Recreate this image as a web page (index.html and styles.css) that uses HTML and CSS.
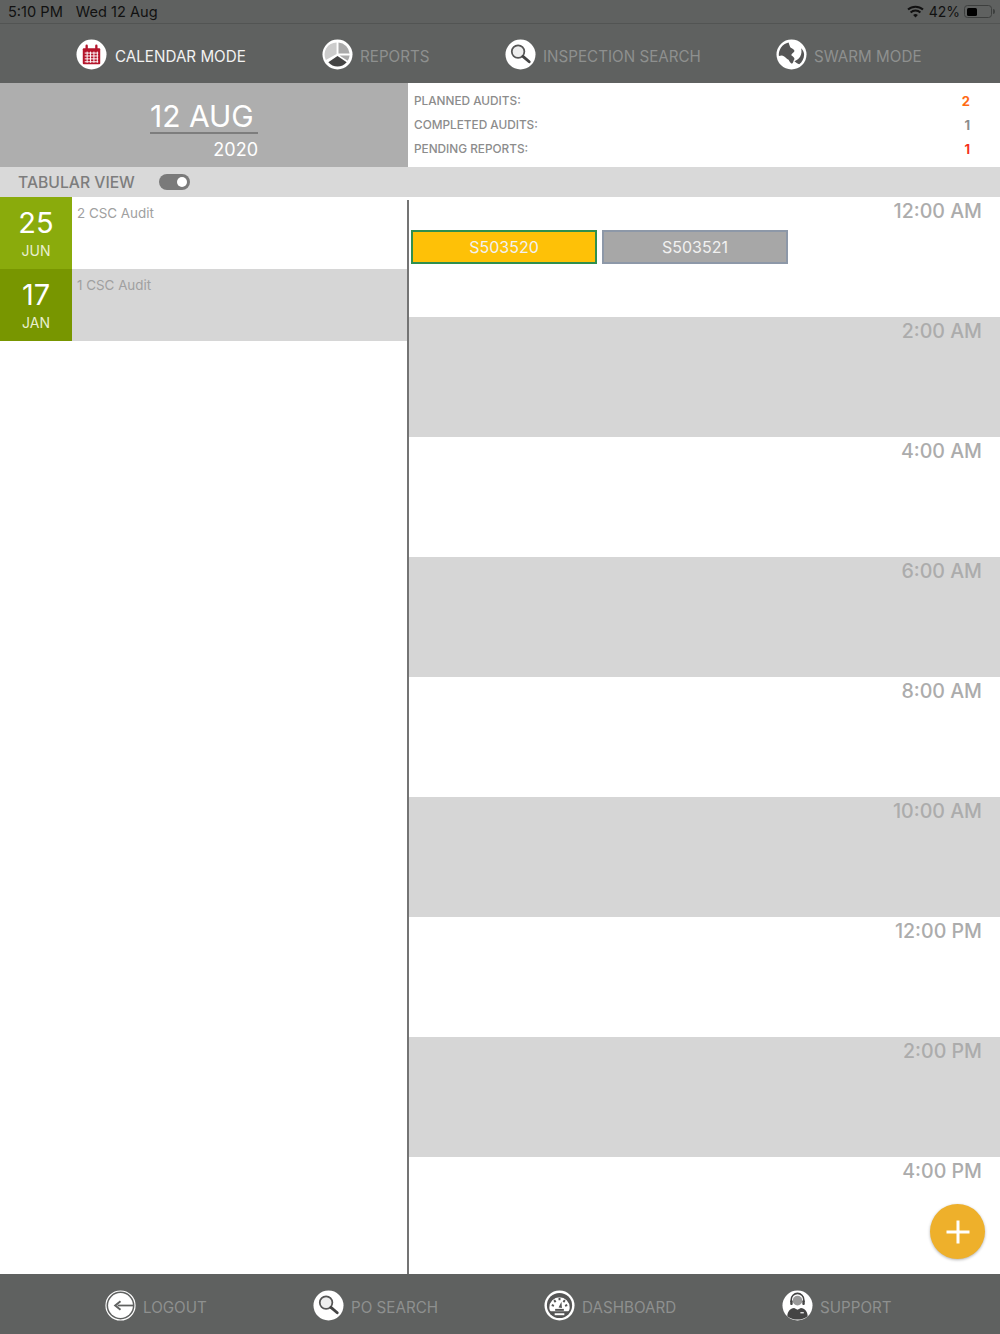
FILE: index.html
```html
<!DOCTYPE html>
<html lang="en">
<head>
  <meta charset="UTF-8" />
  <title>Calendar Mode</title>
  <link rel="stylesheet" href="styles.css">
</head>
<body>
  <div class="status-bar">
    <div class="status-time"><span>5:10 PM</span><span>Wed 12 Aug</span></div>
    <div class="status-right">
      <svg class="wifi" width="17" height="13" viewBox="0 0 17 13">
        <path d="M1 4.600a11 11 0 0 1 15 0" fill="none" stroke="#111" stroke-width="2"/>
        <path d="M3.600 7.400a7.200 7.200 0 0 1 9.800 0" fill="none" stroke="#111" stroke-width="2"/>
        <path d="M6.100 10a3.600 3.600 0 0 1 4.800 0L8.500 12.600z" fill="#111"/>
      </svg>
      <span>42%</span>
      <span class="battery"><span class="battery-fill"></span></span>
      <span class="battery-tip"></span>
    </div>
  </div>

  <nav class="top-nav">
    <a class="nav-item active">
      <svg class="icon" viewBox="0 0 32 32">
        <circle cx="16" cy="16" r="15.500" fill="#fff"/>
        <path d="M8 9.500h16a1 1 0 0 1 1 1V25a1 1 0 0 1-1 1H8a1 1 0 0 1-1-1V10.500a1 1 0 0 1 1-1z" fill="#b5152b"/>
        <path d="M11 7v4M21 7v4" stroke="#b5152b" stroke-width="2.400" stroke-linecap="round"/>
        <path d="M9 14.500h14M9 17.500h14M9 20.500h14M9 23.500h14M11.500 13v11.500M15 13v11.500M18.500 13v11.500M22 13v11.500" stroke="#fff" stroke-width="1"/>
      </svg>
      <span class="nav-label">CALENDAR MODE</span>
    </a>
    <a class="nav-item">
      <svg class="icon" viewBox="0 0 32 32">
        <circle cx="16" cy="16" r="15.500" fill="#fff"/>
        <path d="M15 15.500V3.500a12.500 12.500 0 0 0-11 18.200z" fill="#ccc"/>
        <path d="M17 15V3.500a12.500 12.500 0 0 1 11.500 11.500z" fill="#aaa"/>
        <path d="M18 17h10.500a12.500 12.500 0 0 1-2 5.500z" fill="#aaa"/>
        <path d="M16 17.500l9.500 6.500a12.500 12.500 0 0 1-19 0z" fill="#444"/>
      </svg>
      <span class="nav-label">REPORTS</span>
    </a>
    <a class="nav-item">
      <svg class="icon" viewBox="0 0 32 32">
        <circle cx="16" cy="16" r="15.500" fill="#fff"/>
        <circle cx="13.500" cy="13" r="6.500" fill="#eee" stroke="#555" stroke-width="1.800"/>
        <path d="M18.500 18l6.500 5.500" stroke="#444" stroke-width="3" stroke-linecap="round"/>
      </svg>
      <span class="nav-label">INSPECTION SEARCH</span>
    </a>
    <a class="nav-item">
      <svg class="icon" viewBox="0 0 32 32">
        <circle cx="16" cy="16" r="15.500" fill="#fff"/>
        <path d="M13 3.500c-3 .5-6 2.500-8 5.500-1.500 2.500-2.500 6-2 8.500 2-.5 3.500-1 5.500.5 2 1.500 3 3 4.500 3.500 1 1.500 1.500 3.500 3.500 4 1.500-1 1.500-3.500 2.500-4.500.5-1.500-1.500-3-3-4-.5-2 2.500-2.500 3-4.500 0-2.500-3.500-2.500-4.500-4.500-.5-1.500-1-3-1.500-4.500z" fill="#555"/>
        <path d="M26 9.500c.5 3 .5 6-1 8.500-1.500 2.500-4 4-6 5 1 1 3.500 2.500 5 3 3-2 5-6 5-10 0-2.500-1.500-5-3-6.500z" fill="#555"/>
      </svg>
      <span class="nav-label">SWARM MODE</span>
    </a>
  </nav>

  <header class="summary">
    <div class="date-box">
      <div class="date-inner">
        <div class="date-main">12 AUG</div>
        <div class="date-year">2020</div>
      </div>
    </div>
    <div class="counts">
      <div class="count-row"><span>PLANNED AUDITS:</span><b class="orange">2</b></div>
      <div class="count-row"><span>COMPLETED AUDITS:</span><b>1</b></div>
      <div class="count-row"><span>PENDING REPORTS:</span><b class="red">1</b></div>
    </div>
  </header>

  <div class="view-bar">
    <span>TABULAR VIEW</span>
    <span class="toggle"><span class="knob"></span></span>
  </div>

  <main class="content">
    <section class="audit-list">
      <div class="audit-row">
        <div class="date-tile"><div class="day">25</div><div class="month">JUN</div></div>
        <div class="audit-name">2 CSC Audit</div>
      </div>
      <div class="audit-row alt">
        <div class="date-tile dark"><div class="day">17</div><div class="month">JAN</div></div>
        <div class="audit-name">1 CSC Audit</div>
      </div>
    </section>

    <section class="timeline">
      <div class="slot">
        <div class="time">12:00 AM</div>
        <div class="events">
          <div class="event yellow">S503520</div>
          <div class="event grey">S503521</div>
        </div>
      </div>
      <div class="slot alt"><div class="time">2:00 AM</div></div>
      <div class="slot"><div class="time">4:00 AM</div></div>
      <div class="slot alt"><div class="time">6:00 AM</div></div>
      <div class="slot"><div class="time">8:00 AM</div></div>
      <div class="slot alt"><div class="time">10:00 AM</div></div>
      <div class="slot"><div class="time">12:00 PM</div></div>
      <div class="slot alt"><div class="time">2:00 PM</div></div>
      <div class="slot"><div class="time">4:00 PM</div></div>
      <button class="fab">
        <svg width="26" height="26" viewBox="0 0 26 26"><path d="M13 1.500v23M1.500 13h23" stroke="#fff" stroke-width="3"/></svg>
      </button>
    </section>
  </main>

  <footer class="bottom-nav">
    <a class="nav-item">
      <svg class="icon" viewBox="0 0 32 32">
        <circle cx="16" cy="16" r="15" fill="none" stroke="#fff" stroke-width="1.200"/>
        <circle cx="16" cy="16" r="12.800" fill="#fff"/>
        <path d="M29 16H13" stroke="#5f6160" stroke-width="1.800"/>
        <path d="M16 11.500L10.500 16l5.500 4.500" fill="none" stroke="#5f6160" stroke-width="2"/>
      </svg>
      <span class="nav-label">LOGOUT</span>
    </a>
    <a class="nav-item">
      <svg class="icon" viewBox="0 0 32 32">
        <circle cx="16" cy="16" r="15.500" fill="#fff"/>
        <circle cx="13.500" cy="13" r="6.500" fill="#eee" stroke="#555" stroke-width="1.800"/>
        <path d="M18.500 18l6.500 5.500" stroke="#444" stroke-width="3" stroke-linecap="round"/>
      </svg>
      <span class="nav-label">PO SEARCH</span>
    </a>
    <a class="nav-item">
      <svg class="icon" viewBox="0 0 32 32">
        <circle cx="16" cy="16" r="15.500" fill="#fff"/>
        <circle cx="16" cy="16" r="13" fill="#555"/>
        <path d="M5.500 18a10.500 10.500 0 1 1 21 0c0 2-.5 3-1.500 4H7c-1-1-1.500-2-1.500-4z" fill="#fff"/>
        <path d="M16 8v2.500M10.500 10.500l1.500 2M21.500 10.500l-1.500 2M8 15.500l2.300.8M24 15.500l-2.300.8" stroke="#555" stroke-width="2"/>
        <path d="M15 18l3-6 .5 6.500z" fill="#555"/>
        <rect x="11.500" y="19.500" width="9" height="2" fill="#555"/>
        <rect x="11" y="24" width="10" height="2" fill="#fff"/>
      </svg>
      <span class="nav-label">DASHBOARD</span>
    </a>
    <a class="nav-item">
      <svg class="icon" viewBox="0 0 32 32">
        <circle cx="16" cy="16" r="15.500" fill="#fff"/>
        <circle cx="16" cy="11" r="5" fill="#999"/>
        <path d="M9.500 12V10a6.500 6.500 0 0 1 13 0v2" fill="none" stroke="#444" stroke-width="1.600"/>
        <rect x="8.500" y="10.500" width="2.500" height="5" rx="1" fill="#444"/>
        <rect x="21" y="10.500" width="2.500" height="5" rx="1" fill="#444"/>
        <path d="M5.500 27c0-5 3-8 7-8.500l3.500 2 3.500-2c4 .5 7 3.500 7 8.500-3 2.500-6.500 3.500-10.500 3.500s-7.500-1-10.500-3.500z" fill="#444"/>
        <path d="M19 23.500h3.500" stroke="#fff" stroke-width="1.200"/>
      </svg>
      <span class="nav-label">SUPPORT</span>
    </a>
  </footer>
</body>
</html>
```

FILE: styles.css
```css
* {
  box-sizing: border-box;
}
html, body {
  height: 100%;
}
body {
  margin: 0;
  display: flex;
  flex-direction: column;
  font-family: "Inter", "Liberation Sans", sans-serif;
  background-color: #fff;
  color: #8f8f8f;
}

/* status bar */
.status-bar {
  height: 24px;
  flex: none;
  display: flex;
  justify-content: space-between;
  align-items: center;
  padding: 0 5px 0 8px;
  background-color: #5f6160;
  border-bottom: 1px solid #525453;
  color: #111;
  font-size: 14.600px;
}
.status-time {
  display: flex;
  gap: 13px;
}
.status-right {
  display: flex;
  align-items: center;
  gap: 4px;
  font-size: 14px;
}
.wifi {
  margin-right: 1px;
}
.battery {
  width: 28px;
  height: 13px;
  border: 1px solid #3d3f3e;
  border-radius: 3.500px;
  padding: 1.500px;
}
.battery-fill {
  display: block;
  width: 10px;
  height: 100%;
  background-color: #000;
  border-radius: 1.500px;
}
.battery-tip {
  width: 2px;
  height: 5px;
  margin-left: -3px;
  background-color: #3d3f3e;
  border-radius: 0 2px 2px 0;
}

/* nav bars */
.top-nav, .bottom-nav {
  flex: none;
  display: grid;
  align-items: center;
  padding-top: 2px;
  background-color: #5f6160;
}
.top-nav {
  height: 59px;
  padding-left: 76px;
  grid-template-columns: 246px 183px 271px 1fr;
}
.bottom-nav {
  height: 60px;
  padding-left: 105px;
  grid-template-columns: 208px 231px 238px 1fr;
}
.nav-item {
  display: flex;
  align-items: center;
  gap: 7px;
  font-size: 15.200px;
  color: #8e908f;
}
.nav-item.active {
  gap: 8px;
  color: #f2f2f2;
}
.nav-label {
  padding-top: 3px;
}
.bottom-nav .nav-label {
  padding-top: 4px;
}
.icon {
  width: 31px;
  height: 31px;
  flex: none;
}

/* date + counts */
.summary {
  flex: none;
  height: 84px;
  display: flex;
}
.date-box {
  width: 408px;
  background-color: #aeaeae;
  display: flex;
  justify-content: center;
  color: #fff;
}
.date-inner {
  width: 108px;
  text-align: right;
}
.date-main {
  height: 51px;
  padding-top: 16px;
  border-bottom: 2px solid #7d7d7d;
  font-size: 30px;
  line-height: 35px;
  text-align: left;
}
.date-year {
  padding-top: 1px;
  font-size: 18px;
  line-height: 30px;
}
.counts {
  flex: 1;
  padding: 6px 30px 0 6px;
}
.count-row {
  height: 24px;
  display: flex;
  justify-content: space-between;
  align-items: center;
  font-size: 11.800px;
  font-weight: 500;
  color: #8c8c8c;
}
.count-row b {
  font-size: 13px;
  font-weight: 700;
}
.orange {
  color: #ff6a13;
}
.red {
  color: #f5301a;
}

/* tabular view bar */
.view-bar {
  flex: none;
  height: 30px;
  display: flex;
  align-items: center;
  gap: 24px;
  padding-left: 18px;
  background-color: #d9d9d9;
  font-size: 15.700px;
  font-weight: 500;
  color: #7d7d7d;
}
.toggle {
  width: 31px;
  height: 16px;
  padding: 3px;
  display: flex;
  justify-content: flex-end;
  background-color: #7a7a7a;
  border-radius: 8px;
}
.knob {
  width: 10px;
  height: 10px;
  background-color: #fff;
  border-radius: 50%;
}

/* main area */
.content {
  flex: 1;
  min-height: 0;
  display: flex;
}
.audit-list {
  width: 407px;
  flex: none;
}
.audit-row {
  height: 72px;
  display: flex;
}
.audit-row.alt {
  background-color: #d6d6d6;
}
.date-tile {
  width: 72px;
  flex: none;
  background-color: #8aab0c;
  color: #fff;
  text-align: center;
}
.date-tile.dark {
  background-color: #789600;
}
.day {
  padding-top: 8px;
  font-size: 29px;
  line-height: 36px;
}
.month {
  font-size: 14px;
  line-height: 20px;
  color: #e9efcf;
}
.audit-name {
  padding: 8px 0 0 5px;
  font-size: 13.400px;
  line-height: 17px;
  color: #a0a0a0;
}

/* timeline */
.timeline {
  flex: 1;
  position: relative;
  margin-top: 3px;
  border-left: 2px solid #747474;
  overflow: hidden;
}
.slot {
  height: 120px;
}
.slot:first-child {
  height: 117px;
}
.slot.alt {
  background-color: #d6d6d6;
}
.time {
  height: 29px;
  padding-right: 18px;
  font-size: 19.600px;
  font-weight: 500;
  line-height: 28px;
  text-align: right;
  color: #acacac;
}
.slot:first-child .time {
  height: 22px;
  line-height: 22px;
}
.events {
  display: flex;
  gap: 5px;
  padding: 8px 0 0 2px;
}
.event {
  width: 186px;
  height: 34px;
  display: flex;
  align-items: center;
  justify-content: center;
  font-size: 16px;
  color: #f1f1f1;
}
.event.yellow {
  background-color: #fec107;
  border: 2px solid #2f8f4e;
}
.event.grey {
  background-color: #a7a7a7;
  border: 2px solid #8d98a8;
}
.fab {
  position: absolute;
  right: 15px;
  bottom: 15px;
  width: 55px;
  height: 55px;
  padding: 0;
  display: flex;
  align-items: center;
  justify-content: center;
  border: none;
  border-radius: 50%;
  background-color: #eeb02b;
  box-shadow: 0 1px 3px rgba(0,0,0,0.3);
}
```
